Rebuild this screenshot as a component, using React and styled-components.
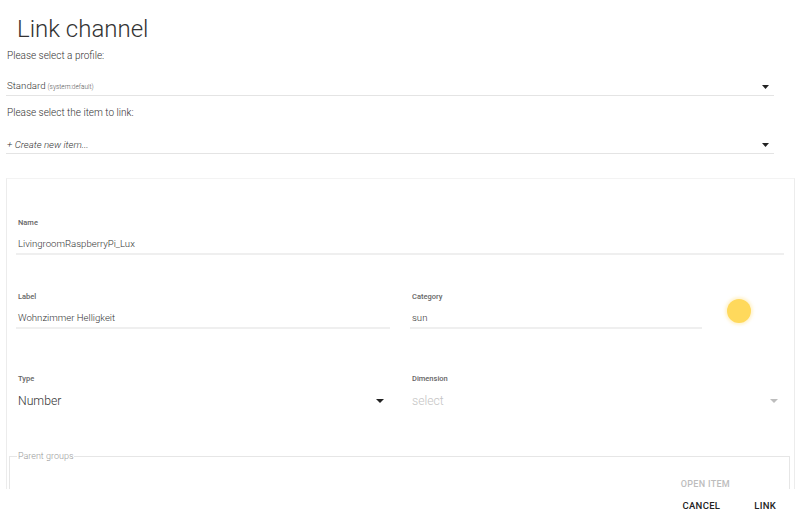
import React from "react";
import styled, { createGlobalStyle } from "styled-components";

const Global = createGlobalStyle`
  html, body { margin: 0; padding: 0; background: #fff; }
  body { font-family: Roboto, "Noto Sans", "Liberation Sans", sans-serif; color: #444; }
  * { box-sizing: border-box; }
`;

const Dialog = styled.div`
  width: 800px;
  height: 522px;
  overflow: hidden;
  padding: 15px 5px 0 6px;
  display: flex;
  flex-direction: column;
`;

const Title = styled.h1`
  margin: 0 0 6px 11px;
  font-size: 24px;
  line-height: 28px;
  font-weight: 300;
  color: #333;
`;

const Prompt = styled.div`
  font-size: 10px;
  line-height: 14px;
  font-weight: 300;
  color: #333;
  padding-left: 1px;
  margin-top: ${(p) => p.$mt || 0}px;
`;

const SelectLine = styled.div`
  display: flex;
  align-items: center;
  margin: ${(p) => p.$mt || 16}px 21px 0 0;
  padding: 1px 0 1px 1px;
  border-bottom: 1px solid #e4e4e4;
  font-size: 9.7px;
  line-height: 14px;
  font-weight: 300;
  color: #333;
  font-style: ${(p) => (p.$italic ? "italic" : "normal")};
`;

const SelectText = styled.span`
  flex: 1;
`;

const Small = styled.span`
  font-size: 6.5px;
  color: #555;
  margin-left: 2px;
`;

const Arrow = styled.svg`
  width: ${(p) => p.$w || 7}px;
  height: 4px;
  margin-right: ${(p) => p.$mr || 5}px;
  fill: ${(p) => (p.$light ? "#bdbdbd" : "#222")};
  flex: none;
`;

const Panel = styled.div`
  margin-top: 24px;
  height: 311px;
  overflow: hidden;
  border: 1px solid #f3f3f3;
  border-left-color: #ececec;
  border-right-color: #ececec;
  border-bottom: none;
  padding: 39px 10px 0 9px;
`;

const Field = styled.div`
  display: flex;
  flex-direction: column;
  flex: ${(p) => p.$flex || "none"};
  min-width: 0;
`;

const FieldLabel = styled.div`
  font-size: 7.5px;
  line-height: 10px;
  font-weight: 500;
  color: #666;
  padding-left: 2px;
`;

const FieldValue = styled.div`
  margin-top: ${(p) => (p.$big ? 8 : 8)}px;
  padding: 0 0 1px 2px;
  font-size: ${(p) => (p.$big ? 12.2 : 9.6)}px;
  line-height: ${(p) => (p.$big ? 18 : 16)}px;
  font-weight: 300;
  color: ${(p) => (p.$placeholder ? "#c4c4c4" : "#333")};
  border-bottom: 2px solid ${(p) => (p.$plain ? "transparent" : "#efefef")};
  display: flex;
  align-items: center;
`;

const Row = styled.div`
  display: grid;
  grid-template-columns: 1fr 1fr;
  column-gap: 20px;
  margin-top: ${(p) => p.$mt}px;
`;

const Cell = styled.div`
  display: flex;
  align-items: center;
`;

const SunDot = styled.div`
  width: 24px;
  height: 24px;
  border-radius: 50%;
  background: #ffd95c;
  box-shadow: 0 0 3px 2px rgba(255, 222, 120, 0.35);
  margin: 0 33px 0 25px;
  flex: none;
`;

const Groups = styled.fieldset`
  margin: 37px -6px 0 -7px;
  padding: 0 7px 20px 7px;
  border: 1px solid #e6e6e6;
  min-height: 60px;
  display: flex;
  justify-content: flex-end;
`;

const Legend = styled.legend`
  padding: 0 1px;
  font-size: 9px;
  line-height: 12px;
  font-weight: 300;
  color: #999;
`;

const GhostButton = styled.div`
  margin: 17px 52px 0 0;
  font-size: 9px;
  line-height: 11px;
  font-weight: 500;
  letter-spacing: 0.3px;
  color: #bdbdbd;
`;

const Footer = styled.div`
  display: flex;
  justify-content: flex-end;
  gap: 18px;
  padding: 2px 11px 0 0;
`;

const Button = styled.button`
  background: none;
  border: none;
  font-family: inherit;
  font-size: 9.5px;
  font-weight: 500;
  letter-spacing: 0.3px;
  color: #222;
  height: 28px;
  line-height: 27px;
  padding: 0 8px;
  cursor: pointer;
`;

const DropArrow = ({ light, mr, w }) => (
  <Arrow $light={light} $mr={mr} $w={w} viewBox="0 0 8 4" preserveAspectRatio="none">
    <polygon points="0,0 8,0 4,4" />
  </Arrow>
);

export default function App() {
  return (
    <>
      <Global />
      <Dialog>
        <Title>Link channel</Title>
        <Prompt>Please select a profile:</Prompt>
        <SelectLine $mt={15}>
          <SelectText>
            Standard<Small>(system:default)</Small>
          </SelectText>
          <DropArrow mr={5} />
        </SelectLine>
        <Prompt $mt={10}>Please select the item to link:</Prompt>
        <SelectLine $mt={17} $italic>
          <SelectText>+ Create new item...</SelectText>
          <DropArrow mr={5} />
        </SelectLine>
        <Panel>
          <Field>
            <FieldLabel>Name</FieldLabel>
            <FieldValue>LivingroomRaspberryPi_Lux</FieldValue>
          </Field>
          <Row $mt={37}>
            <Field>
              <FieldLabel>Label</FieldLabel>
              <FieldValue>Wohnzimmer Helligkeit</FieldValue>
            </Field>
            <Cell>
              <Field $flex="1">
                <FieldLabel>Category</FieldLabel>
                <FieldValue>sun</FieldValue>
              </Field>
              <SunDot />
            </Cell>
          </Row>
          <Row $mt={45}>
            <Field>
              <FieldLabel>Type</FieldLabel>
              <FieldValue $big $plain>
                <SelectText>Number</SelectText>
                <DropArrow mr={6} w={8} />
              </FieldValue>
            </Field>
            <Field>
              <FieldLabel>Dimension</FieldLabel>
              <FieldValue $big $plain $placeholder>
                <SelectText>select</SelectText>
                <DropArrow light mr={6} w={8} />
              </FieldValue>
            </Field>
          </Row>
          <Groups>
            <Legend>Parent groups</Legend>
            <GhostButton>OPEN ITEM</GhostButton>
          </Groups>
        </Panel>
        <Footer>
          <Button>CANCEL</Button>
          <Button>LINK</Button>
        </Footer>
      </Dialog>
    </>
  );
}
